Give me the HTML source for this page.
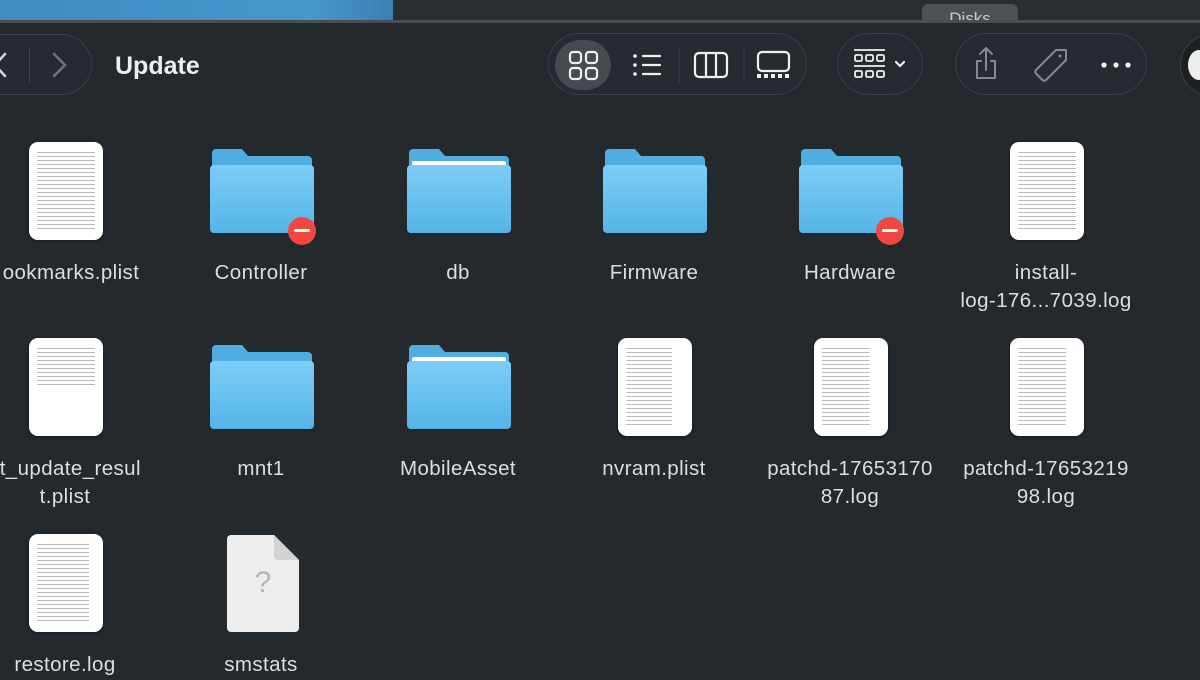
<!DOCTYPE html>
<html><head><meta charset="utf-8"><style>
*{margin:0;padding:0;box-sizing:border-box}
body{width:1200px;height:680px;overflow:hidden;background:#24292d;font-family:"Liberation Sans",sans-serif;position:relative}
.abs{position:absolute}
.pill{position:absolute;border:1.5px solid #36424a;border-radius:32px;background:#252b30}
.doc{position:absolute;width:74px;height:98px;background:#fff;border-radius:9px;box-shadow:0 1px 3px rgba(0,0,0,.4)}
.doc i{position:absolute;left:8px;right:8px;top:8px;bottom:8px;background:repeating-linear-gradient(#fff 0 2px,#b9b9b9 2px 3px,#fff 3px 4px)}
.lab{position:absolute;width:196px;text-align:center;color:#dcdedf;font-size:20.5px;letter-spacing:0.4px;line-height:28px;white-space:nowrap}
.fold{position:absolute;width:104px;height:84px}
</style></head><body>
<div class="abs" style="left:0;top:0;width:1200px;height:21px;background:#2a2e31"></div>
<div class="abs" style="left:0;top:0;width:393px;height:20px;background:linear-gradient(90deg,#3f8bc4,#4797cf 80%,#3a7fb4)"></div>
<div class="abs" style="left:922px;top:4px;width:96px;height:20px;background:#4b5156;border-radius:6px;color:#c8cacc;font-size:17px;text-align:center;line-height:30px;overflow:hidden">Disks</div>
<div class="abs" style="left:0;top:20px;width:1200px;height:3px;background:#4a4e52"></div>
<div class="abs" style="left:0;top:23px;width:1200px;height:657px;background:#24292d"></div>

<div class="pill" style="left:-40px;top:34px;width:132px;height:61px"></div>
<div class="abs" style="left:29px;top:48px;width:1px;height:34px;background:#3e464c"></div>
<svg class="abs" style="left:0;top:50px" width="80" height="30"><path d="M5 4 L-5 15 L5 26" stroke="#d8d8d8" stroke-width="2.5" fill="none" stroke-linecap="round"/><path d="M54 4 L65 15 L54 26" stroke="#6d747a" stroke-width="2.5" fill="none" stroke-linecap="round"/></svg>
<div class="abs" style="left:115px;top:52px;color:#eceeef;font-size:25px;font-weight:bold">Update</div>

<div class="pill" style="left:548px;top:33px;width:259px;height:62px"></div>
<div class="abs" style="left:555px;top:40px;width:56px;height:50px;border-radius:25px;background:#454b50"></div>
<svg class="abs" style="left:560px;top:40px" width="250" height="50">
<g stroke="#f0f0f0" stroke-width="2.2" fill="none">
<rect x="10" y="12" width="11" height="11" rx="3"/><rect x="26" y="12" width="11" height="11" rx="3"/><rect x="10" y="28" width="11" height="11" rx="3"/><rect x="26" y="28" width="11" height="11" rx="3"/>
<path d="M83 16h17M83 25h17M83 34h17" stroke-linecap="round"/>
<rect x="135" y="13" width="32" height="24" rx="4"/><path d="M146 13v24M156 13v24"/>
<rect x="198" y="12" width="31" height="19" rx="4"/>
</g>
<g fill="#f0f0f0"><circle cx="75" cy="16" r="1.8"/><circle cx="75" cy="25" r="1.8"/><circle cx="75" cy="34" r="1.8"/>
<rect x="197" y="34" width="4" height="4"/><rect x="204" y="34" width="4" height="4"/><rect x="211" y="34" width="4" height="4"/><rect x="218" y="34" width="4" height="4"/><rect x="225" y="34" width="4" height="4"/></g>
<path d="M119 7v36M184 7v36" stroke="#3a4248" stroke-width="1"/>
</svg>

<div class="pill" style="left:837px;top:33px;width:86px;height:62px"></div>
<svg class="abs" style="left:850px;top:45px" width="70" height="40" fill="none" stroke="#eee" stroke-width="1.8">
<path d="M4 5h31M4 21h31"/><rect x="5" y="10" width="7" height="6" rx="1.5"/><rect x="16" y="10" width="7" height="6" rx="1.5"/><rect x="27" y="10" width="7" height="6" rx="1.5"/>
<rect x="5" y="26" width="7" height="6" rx="1.5"/><rect x="16" y="26" width="7" height="6" rx="1.5"/><rect x="27" y="26" width="7" height="6" rx="1.5"/>
<path d="M46 17l4 4 4-4" stroke-width="2.2" stroke-linecap="round"/></svg>

<div class="pill" style="left:955px;top:33px;width:192px;height:62px"></div>
<svg class="abs" style="left:960px;top:40px" width="180" height="50" fill="none" stroke="#858b90" stroke-width="2" stroke-linecap="round" stroke-linejoin="round">
<path d="M26 8v22M20 14l6-6 6 6M21 21h-4v17h18V21h-4"/>
<path d="M96 10h10v10l-20 20a2.5 2.5 0 0 1-3.5 0l-6.5-6.5a2.5 2.5 0 0 1 0-3.5z"/>
<circle cx="100" cy="16" r="1.5" fill="#858b90" stroke="none"/>
<g fill="#f2f2f2" stroke="none"><circle cx="144" cy="25" r="2.6"/><circle cx="156" cy="25" r="2.6"/><circle cx="168" cy="25" r="2.6"/></g>
</svg>
<div class="abs" style="left:1180px;top:34px;width:62px;height:62px;border-radius:50%;border:1.5px solid #36424a;background:#1c2023"></div>
<div class="abs" style="left:1188px;top:50px;width:22px;height:30px;border-radius:50%;background:#eee"></div>

<!-- row 1 -->
<div class="doc" style="left:29px;top:142px"><i></i></div>
<svg class="fold" style="left:210px;top:149px" viewBox="0 0 104 84"><path d="M2 4a4 4 0 0 1 4-4h26l6 7h60a4 4 0 0 1 4 4v69H2z" fill="#4eaee2"/><rect x="0" y="16" width="104" height="68" rx="4" fill="url(#g)"/><defs><linearGradient id="g" x1="0" y1="0" x2="0" y2="1"><stop offset="0" stop-color="#7ccdf6"/><stop offset="1" stop-color="#55b4e7"/></linearGradient></defs></svg>
<div class="abs" style="left:288px;top:217px;width:28px;height:28px;border-radius:50%;background:#f04840"></div><div class="abs" style="left:294px;top:229px;width:16px;height:3px;background:#fff;border-radius:2px"></div>
<svg class="fold" style="left:407px;top:149px" viewBox="0 0 104 84"><path d="M2 4a4 4 0 0 1 4-4h26l6 7h60a4 4 0 0 1 4 4v69H2z" fill="#4eaee2"/><rect x="5" y="12" width="94" height="6" rx="2" fill="#fff"/><rect x="0" y="16" width="104" height="68" rx="4" fill="url(#g)"/></svg>
<svg class="fold" style="left:603px;top:149px" viewBox="0 0 104 84"><path d="M2 4a4 4 0 0 1 4-4h26l6 7h60a4 4 0 0 1 4 4v69H2z" fill="#4eaee2"/><rect x="0" y="16" width="104" height="68" rx="4" fill="url(#g)"/></svg>
<svg class="fold" style="left:799px;top:149px" viewBox="0 0 104 84"><path d="M2 4a4 4 0 0 1 4-4h26l6 7h60a4 4 0 0 1 4 4v69H2z" fill="#4eaee2"/><rect x="0" y="16" width="104" height="68" rx="4" fill="url(#g)"/></svg>
<div class="abs" style="left:876px;top:217px;width:28px;height:28px;border-radius:50%;background:#f04840"></div><div class="abs" style="left:882px;top:229px;width:16px;height:3px;background:#fff;border-radius:2px"></div>
<div class="doc" style="left:1010px;top:142px"><i></i></div>
<div class="lab" style="left:-27px;top:259px">ookmarks.plist</div>
<div class="lab" style="left:163px;top:259px">Controller</div>
<div class="lab" style="left:360px;top:259px">db</div>
<div class="lab" style="left:556px;top:259px">Firmware</div>
<div class="lab" style="left:752px;top:259px">Hardware</div>
<div class="lab" style="left:948px;top:259px">install-<br>log-176...7039.log</div>

<!-- row 2 -->
<div class="doc" style="left:29px;top:338px"><i style="bottom:50px"></i></div>
<svg class="fold" style="left:210px;top:345px" viewBox="0 0 104 84"><path d="M2 4a4 4 0 0 1 4-4h26l6 7h60a4 4 0 0 1 4 4v69H2z" fill="#4eaee2"/><rect x="0" y="16" width="104" height="68" rx="4" fill="url(#g)"/></svg>
<svg class="fold" style="left:407px;top:345px" viewBox="0 0 104 84"><path d="M2 4a4 4 0 0 1 4-4h26l6 7h60a4 4 0 0 1 4 4v69H2z" fill="#4eaee2"/><rect x="5" y="12" width="94" height="6" rx="2" fill="#fff"/><rect x="0" y="16" width="104" height="68" rx="4" fill="url(#g)"/></svg>
<div class="doc" style="left:618px;top:338px"><i style="right:20px"></i></div>
<div class="doc" style="left:814px;top:338px"><i style="right:18px"></i></div>
<div class="doc" style="left:1010px;top:338px"><i style="right:18px"></i></div>
<div class="lab" style="left:-33px;top:455px">st_update_resul<br>t.plist</div>
<div class="lab" style="left:163px;top:455px">mnt1</div>
<div class="lab" style="left:360px;top:455px">MobileAsset</div>
<div class="lab" style="left:556px;top:455px">nvram.plist</div>
<div class="lab" style="left:752px;top:455px">patchd-17653170<br>87.log</div>
<div class="lab" style="left:948px;top:455px">patchd-17653219<br>98.log</div>

<!-- row 3 -->
<div class="doc" style="left:29px;top:534px"><i style="right:14px"></i></div>
<svg class="abs" style="left:226px;top:534px" width="74" height="100"><path d="M4 1h44l25 25v68a4 4 0 0 1-4 4H5a4 4 0 0 1-4-4V5a4 4 0 0 1 4-4z" fill="#ededed"/><path d="M48 1v21a4 4 0 0 0 4 4h21z" fill="#d2d2d2"/><text x="37" y="58" font-family="Liberation Sans" font-size="30" fill="#b5b5b5" text-anchor="middle">?</text></svg>
<div class="lab" style="left:-33px;top:651px">restore.log</div>
<div class="lab" style="left:163px;top:651px">smstats</div>
</body></html>
